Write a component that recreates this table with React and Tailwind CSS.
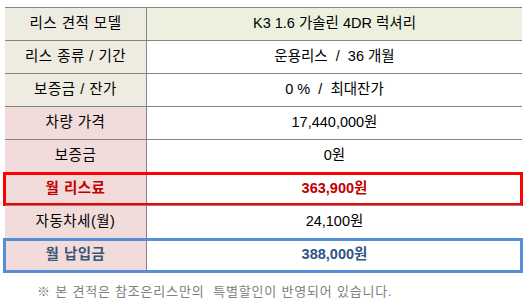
const rows = [
  { label: "리스 견적 모델", value: "K3 1.6 가솔린 4DR 럭셔리", labelBg: "bg-[#eeece1]", valueBg: "bg-[#ebf1de]" },
  { label: "리스 종류 / 기간", value: "운용리스  /  36 개월", labelBg: "bg-[#eeece1]", valueBg: "bg-white" },
  { label: "보증금 / 잔가", value: "0 %  /  최대잔가", labelBg: "bg-[#eeece1]", valueBg: "bg-white" },
  { label: "차량 가격", value: "17,440,000원", labelBg: "bg-[#f2dcdb]", valueBg: "bg-white" },
  { label: "보증금", value: "0원", labelBg: "bg-[#f2dcdb]", valueBg: "bg-white" },
  { label: "월 리스료", value: "363,900원", labelBg: "bg-[#f2dcdb]", valueBg: "bg-white", tone: "red" },
  { label: "자동차세(월)", value: "24,100원", labelBg: "bg-[#f2dcdb]", valueBg: "bg-white" },
  { label: "월 납입금", value: "388,000원", labelBg: "bg-[#f2dcdb]", valueBg: "bg-white", tone: "blue" },
];

function Row({ row }) {
  const labelColor =
    row.tone === "red" ? "text-[#c00000] font-bold" : row.tone === "blue" ? "text-[#3b5575] font-bold" : "text-black";
  const valueColor =
    row.tone === "red" ? "text-[#c00000] font-bold" : row.tone === "blue" ? "text-[#2f5485] font-bold" : "text-black";

  return (
    <div className="relative flex h-[33px] border-t border-[#858585]">
      <div className={`flex w-[142px] items-center justify-center border-r border-[#858585] ${row.labelBg} ${labelColor}`}>
        <span className="whitespace-pre tracking-[0.5px]">{row.label}</span>
      </div>
      <div className={`flex flex-1 items-center justify-center ${row.valueBg} ${valueColor}`}>
        <span className="whitespace-pre">{row.value}</span>
      </div>
      {row.tone === "red" && (
        <div className="pointer-events-none absolute -left-[2px] -right-[1px] -top-px -bottom-[1px] border-[3px] border-[#ff0000]" />
      )}
      {row.tone === "blue" && (
        <div className="pointer-events-none absolute -left-[2px] -right-[1px] -top-px -bottom-[2px] border-[3px] border-[#558ed5]" />
      )}
    </div>
  );
}

export default function App() {
  return (
    <div
      className="h-[306px] w-[525px] bg-white pt-[7px] pl-[5px] text-[14.5px]"
      style={{ fontFamily: '"Liberation Sans", "Noto Sans CJK KR", sans-serif' }}
    >
      <div className="w-[517px]">
        {rows.map((row) => (
          <Row key={row.label} row={row} />
        ))}
      </div>
      <p className="mt-[11px] pl-[32px] whitespace-pre text-[13px] tracking-[0.8px] text-[#808080]">
        ※ 본 견적은 참조은리스만의  특별할인이 반영되어 있습니다.
      </p>
    </div>
  );
}
